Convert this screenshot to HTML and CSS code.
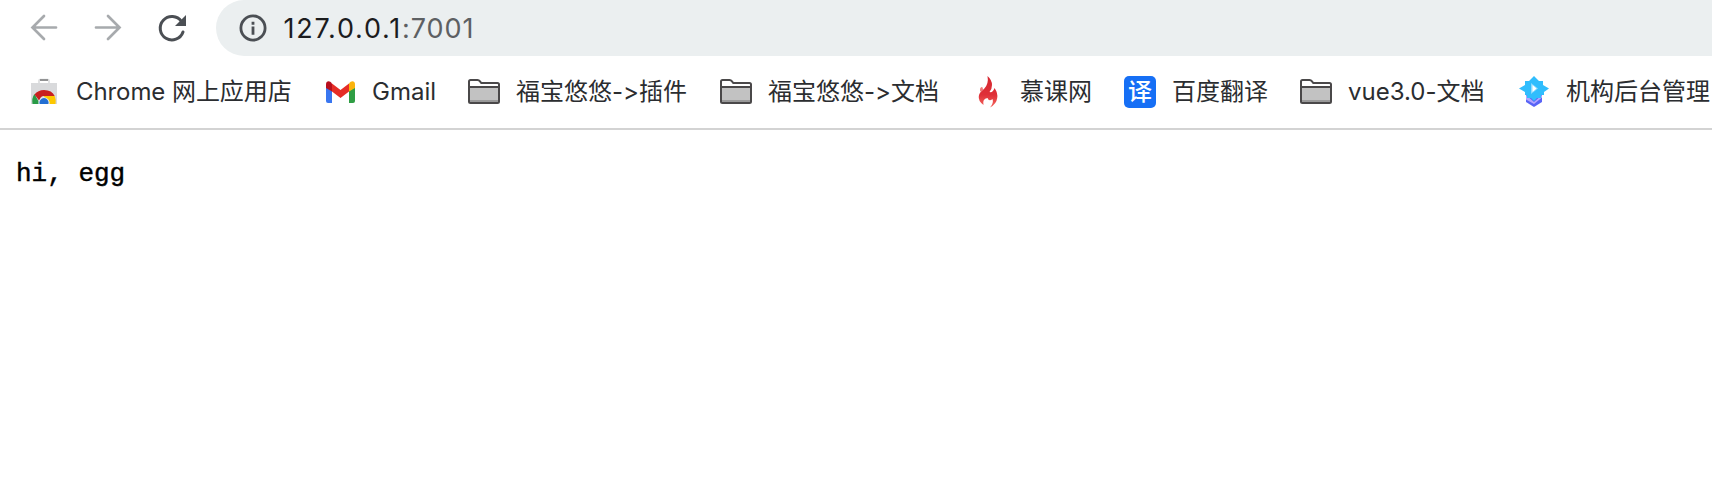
FILE: index.html
```html
<!DOCTYPE html>
<html lang="zh-CN">
<head>
<meta charset="utf-8">
<title>127.0.0.1:7001</title>
<link rel="stylesheet" href="styles.css">
</head>
<body>
<svg class="defs" aria-hidden="true">
  <symbol id="folder" viewBox="0 0 32 32">
    <path d="M1 23V5.500Q1 4 2.500 4H9.500Q11 4 12 5.300L13.300 7H29.500Q31 7 31 8.500V25.500Q31 27 29.500 27H2.500Q1 27 1 25.500Z" fill="#fff" stroke="#4a4849" stroke-width="2"/>
    <path d="M2 12H30V26H2Z" fill="#c2c2c2"/>
    <path d="M2 24H30V26H2Z" fill="#999"/>
    <path d="M1 11H31" stroke="#4a4849" stroke-width="2"/>
  </symbol>
</svg>
<header class="browser">
  <nav class="toolbar">
    <svg class="nav-icon muted" viewBox="0 0 32 32"><path d="M28 15.500H5M16 4L4.500 15.500L16 27"/></svg>
    <svg class="nav-icon muted" viewBox="0 0 32 32"><path d="M4 15.500H27M16 4L27.500 15.500L16 27"/></svg>
    <svg class="nav-icon" viewBox="0 0 32 32"><path class="reload" d="M27 20A11.700 11.700 0 1 1 25.500 9.500"/><path d="M30 3V14H19Z" fill="#4b4f54" stroke="none"/></svg>
    <div class="omnibox">
      <svg class="info" viewBox="0 0 28 28"><circle cx="14" cy="14" r="12.100"/><path d="M14 12.500V20.800M14 7.700V10.700"/></svg>
      <span class="url">127.0.0.1<span class="port">:7001</span></span>
    </div>
  </nav>
  <nav class="bookmarks">
    <a class="bookmark w-store"><svg class="icon" viewBox="0 0 32 32">
      <path d="M11 7V4.500Q11 3.500 12 3.500H20Q21 3.500 21 4.500V7" fill="none" stroke="#d8d9da" stroke-width="1.500"/>
      <path d="M12 3H20V5H12Z" fill="#929394"/>
      <path d="M3 7H29V28H3Z" fill="#d9dadc"/>
      <path d="M4.500 28Q3.500 22 6.500 18L12 28Z" fill="#299b46"/>
      <path d="M6.500 18.500Q10 14 16 14Q24 14 26.700 20H16Q12 20 11.500 25Z" fill="#c9201f"/>
      <path d="M16 20H26.700Q28.300 24 27.500 28H18Z" fill="#fdc800"/>
      <path d="M10.500 28A5.600 5.600 0 1 1 21.500 28Z" fill="#e9eef5"/>
      <path d="M11.600 28A4.600 4.600 0 1 1 20.400 28Z" fill="#236fd3"/>
    </svg><span>Chrome 网上应用店</span></a>
    <a class="bookmark w-gmail"><svg class="icon" viewBox="0 0 32 32">
      <path d="M2 11L8 15V27H4Q2 27 2 25Z" fill="#3976f0"/>
      <path d="M31 11L25 15V27H29Q31 27 31 25Z" fill="#2f9e44"/>
      <path d="M8 7.500L16.500 14L25 7.500V15.500L16.500 22L8 15.500Z" fill="#e52d27"/>
      <path d="M2 12V8.500C2 5 5.500 4 8 7.500V15.500L2 12Z" fill="#b80f1d"/>
      <path d="M31 12V8.500C31 5 27.500 4 25 7.500V15.500L31 12Z" fill="#fbb30b"/>
    </svg><span>Gmail</span></a>
    <a class="bookmark w-folder"><svg class="icon"><use href="#folder"/></svg><span>福宝悠悠-&gt;插件</span></a>
    <a class="bookmark w-folder"><svg class="icon"><use href="#folder"/></svg><span>福宝悠悠-&gt;文档</span></a>
    <a class="bookmark w-imooc"><svg class="icon" viewBox="0 0 32 32">
      <defs><linearGradient id="flame" x2="0" y2="1"><stop offset="0" stop-color="#d62731"/><stop offset=".6" stop-color="#df3038"/><stop offset="1" stop-color="#f5675f"/></linearGradient></defs>
      <path d="M15.500 0Q20 4 20 9Q20 13 17.500 16Q21 17 22.500 12Q26 17 25.200 22Q24.500 28 18 31.500Q22 27 20.500 23Q17 26 15.500 22Q10 23 11.500 29Q6 25 6.800 20Q7.500 16 12 13Q17 8 15.500 0Z" fill="url(#flame)"/>
      <path d="M8.300 12Q11 9 11 14Q7 18 8.300 12Z" fill="#ef7b7b"/>
    </svg><span>慕课网</span></a>
    <a class="bookmark w-baidu"><span class="icon translate">译</span><span>百度翻译</span></a>
    <a class="bookmark w-vue"><svg class="icon"><use href="#folder"/></svg><span>vue3.0-文档</span></a>
    <a class="bookmark"><svg class="icon" viewBox="0 0 32 32">
      <path d="M8 19H24V26L16 31L8 26Z" fill="#5964f6"/>
      <path d="M8 19L16 26L24 19V21.500L16 28L8 23.500Z" fill="#b2a7ff"/>
      <path d="M16 0L21 5H25V9L31 12.500L26 16V19H23V22H19L16 25L13 22H9V19H7V16L1 12.500L7 9V5H11Z" fill="#30bdfd"/>
      <path d="M13 7L20 12.500L13 18Z" fill="#8cdafe"/><path d="M14.500 9L18.500 12.500L14.500 16Z" fill="#fff"/>
    </svg><span>机构后台管理</span></a>
  </nav>
</header>
<main><pre class="response">hi, egg</pre></main>
</body>
</html>
```
FILE: styles.css
```css
body { margin: 0; background: #fff; overflow: hidden; }
.defs { display: none; }
.browser { height: 128px; border-bottom: 2px solid #d3d3d3; font-family: Inter, "Noto Sans CJK SC", sans-serif; font-variant-ligatures: none; font-feature-settings: "calt" 0; }
.toolbar { display: flex; align-items: center; gap: 32px; height: 56px; padding-left: 28px; }
.nav-icon { flex: none; width: 32px; height: 32px; fill: none; stroke: #4b4f54; stroke-width: 2.7; stroke-linecap: round; }
.nav-icon.muted { stroke: #a7aaad; }
.nav-icon .reload { stroke-width: 3; }
.omnibox { flex: 1; display: flex; align-items: center; height: 56px; margin-left: -4px; padding-left: 22px; border-radius: 28px 0 0 28px; background: #ebeff0; }
.info { width: 28px; height: 28px; margin-left: 0.5px; fill: none; stroke: #4b4f54; stroke-width: 2.8; }
.url { margin-left: 17px; padding-top: 1px; font-family: Inter, sans-serif; font-size: 27px; line-height: 56px; letter-spacing: 1.75px; color: #1b1c1e; white-space: nowrap; }
.port { letter-spacing: 1px; color: #5d6063; }
.bookmarks { display: flex; align-items: center; gap: 32px; height: 72px; padding-left: 28px; overflow: hidden; }
.bookmark { flex: none; display: flex; align-items: center; gap: 16px; height: 32px; font-size: 24px; line-height: 32px; color: #2b2d30; white-space: nowrap; }
.icon { flex: none; width: 32px; height: 32px; }
.w-store { width: 264px; letter-spacing: -0.08px; }
.w-gmail { width: 112px; }
.w-folder { width: 220px; }
.w-imooc { width: 120px; }
.w-baidu { width: 144px; }
.w-vue { width: 186px; }
.translate { border-radius: 5px; background: #166ff5; color: #fff; font-weight: 500; line-height: 31px; text-align: center; }
.response { margin: 29px 0 0 16px; font: 26px/30px "Liberation Mono", monospace; color: #000; -webkit-text-stroke: .4px; }
```
